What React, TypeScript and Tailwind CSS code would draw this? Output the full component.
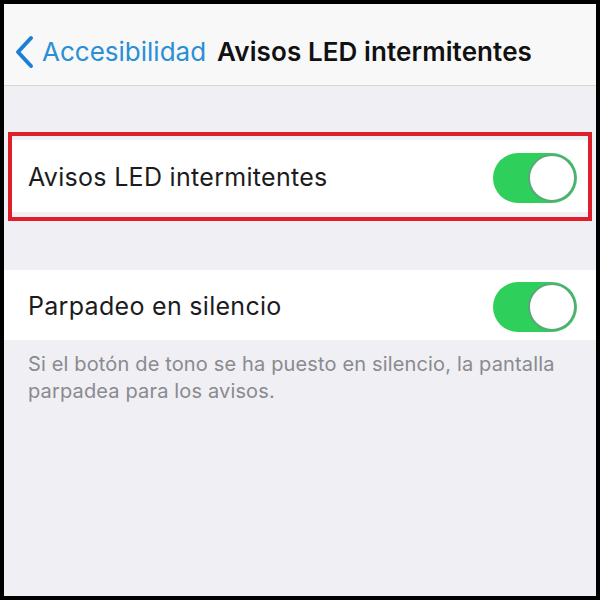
import React from "react"

const font = { fontFamily: "Inter, 'Noto Sans', sans-serif" }

// iOS style switch, always on
const Toggle = () => (
  <div className="relative h-[50px] w-[84px] shrink-0 rounded-full bg-[#2fcf5b]">
    <div className="absolute right-[1px] top-[1px] h-[48px] w-[48px] rounded-full border-2 border-[#5aa77a] bg-white" />
  </div>
)

export default function App() {
  return (
    <div className="h-[600px] w-[600px] bg-black p-[4px]" style={font}>
      <div className="flex h-full flex-col bg-[#efeff4]">
        {/* nav bar */}
        <div className="flex h-[82px] items-center border-b border-[#d6d6db] bg-[#f8f8f8] pt-[14px]">
          <svg className="ml-[10px] h-[34px] w-[22px]" viewBox="0 0 22 34" fill="none">
            <path d="M17 3 L4 17 L17 31" stroke="#1b7fd8" strokeWidth="4" strokeLinecap="round" strokeLinejoin="round" />
          </svg>
          <span className="ml-[6px] text-[26px] text-[#2a8fd6]">Accesibilidad</span>
          <span className="ml-[11px] text-[26px] font-semibold tracking-[0.1px] text-[#111]">Avisos LED intermitentes</span>
        </div>

        {/* highlighted row */}
        <div className="mx-[4px] mt-[46px] border-4 border-[#dc1f2a] pb-[5px] pt-[4px]">
          <div className="flex h-[72px] items-center justify-between bg-white pl-[16px] pr-[11px] pt-[4px]">
            <span className="text-[25px] tracking-[0.3px] text-[#1c1c1e]">Avisos LED intermitentes</span>
            <Toggle />
          </div>
        </div>

        <div className="mt-[49px] flex h-[70px] items-center justify-between bg-white pl-[24px] pr-[19px] pt-[4px]">
          <span className="text-[25px] tracking-[0.3px] text-[#1c1c1e]">Parpadeo en silencio</span>
          <Toggle />
        </div>

        <p className="px-[24px] pt-[11px] text-[20px] leading-[27px] tracking-[0.15px] text-[#8a8a8f]">
          Si el botón de tono se ha puesto en silencio, la pantalla parpadea para los avisos.
        </p>
      </div>
    </div>
  )
}
